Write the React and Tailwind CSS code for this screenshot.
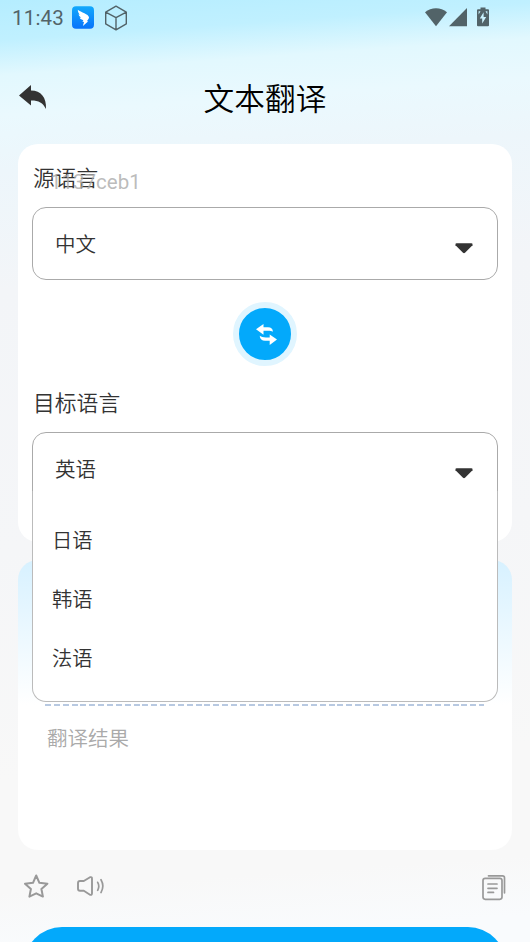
const options = ['日语', '韩语', '法语'];

function StatusBar() {
  return (
    <div className="flex h-9 items-center pl-3 pr-[41px] text-[#526368]">
      <span className="w-[60px] pt-px font-['Roboto'] text-[20.5px] font-normal leading-none tracking-[0.2px]">11:43</span>
      <svg className="-mt-px" width="22" height="23" viewBox="0 0 22 23">
        <defs>
          <linearGradient id="app" x1="0" y1="0" x2="0" y2="1">
            <stop offset="0" stopColor="#12a9fc" />
            <stop offset="1" stopColor="#0873fb" />
          </linearGradient>
        </defs>
        <rect y=".3" width="22" height="22.4" rx="4" fill="url(#app)" />
        <path d="M5.8 3.7C9 6.2 16.600 8 17 11.300c.1 1.200-1.200 2.800-2.100 4h1.400l-5.400 4.600 1.100-4-1.600-.3 1-1.300C8.700 13.500 7.900 12.500 7.700 11.600l1.500.1C7.500 10.700 6.800 9.500 6.600 8.300l1.200.4C6.400 7 5.800 5.400 5.800 3.700z" fill="#fff" />
      </svg>
      <svg className="-mt-px ml-[10px]" width="24" height="26" viewBox="0 0 24 26" fill="none" stroke="currentColor" strokeWidth="1.400" strokeLinejoin="round">
        <path d="M12 1.200l10.300 5.900v11.800L12 24.800 1.700 18.900V7.100zM1.700 7.100L12 12.700l10.300-5.600M12 12.700v12.100" />
      </svg>
      <svg className="-mt-px ml-auto" width="22" height="19" viewBox="0 0 22 19" fill="currentColor">
        <path d="M0 4.300C6.300-1.100 15.700-1.100 22 4.300L11 18.300z" />
      </svg>
      <svg className="-mt-px ml-[2px]" width="18" height="19" viewBox="0 0 18 19" fill="currentColor">
        <path d="M18 0v18.300H0z" />
      </svg>
      <svg className="-mt-[3px] ml-[10.500px]" width="12" height="20" viewBox="0 0 12 20" fill="currentColor">
        <path fillRule="evenodd" d="M3.500.5h5v1.700H11q1 0 1 1v15q0 1-1 1H1q-1 0-1-1v-15q0-1 1-1h2.500zM6.600 5.300L2.800 11.600h2.400v4.900l4-6.500H6.600zM1.600 4.200v3.200L3.500 4.200zM8.500 4.200l1.900 3.200V4.200z" />
      </svg>
    </div>
  );
}

function Header() {
  return (
    <header className="grid h-[108px] grid-cols-[1fr_auto_1fr] items-start pt-[39px]">
      <svg className="ml-[19px] mt-[10px]" width="28" height="25" viewBox="0 0 28 25" fill="#333">
        <path d="M0 10.400L12 0v5.400C22 5.600 27.600 12 27 24 23.800 17.400 19.500 15.300 12 15.400v5.200z" />
      </svg>
      <h1 className="text-[30.700px] font-[350] leading-[44px] text-black">文本翻译</h1>
    </header>
  );
}

function Select({ value }) {
  return (
    <div className="flex h-[73px] items-center justify-between rounded-[14px] border border-[#aaa] bg-white pl-[22px] pr-[24px] text-[20.500px] text-[#333]">
      <span>{value}</span>
      <svg className="mt-[9px]" width="18" height="11" viewBox="0 0 18 11">
        <path d="M1.500.3h15q1.500.2 1 1.900L10 9.800q-1 .9-2 0L.5 2.200Q0 .5 1.500.3z" fill="#333" />
      </svg>
    </div>
  );
}

function LanguageCard() {
  return (
    <section className="relative h-[398px] rounded-[20px] bg-white px-[14px] pt-[17px]">
      <h2 className="h-[46px] pl-px text-[21.700px] leading-[31px] text-[#333]">源语言</h2>
      <span className="absolute left-[32px] top-[26px] font-['Roboto'] text-[20.500px] font-normal leading-6 text-[#aaa]/80">1137ceb1</span>
      <Select value="中文" />
      <div className="flex justify-center pb-[21px] pt-[22px]">
        <button className="flex size-[64px] items-center justify-center rounded-full border-[6px] border-[#e0f5ff] bg-[#03a9fb]">
          <svg className="ml-[3px]" width="21" height="21" viewBox="0 0 21 21" fill="#fff">
            <path d="M0 5.200L7.500 0v3.200H12c3.200 0 4.900 1.600 4.900 4.600-1.500-.9-2.500-1.100-4.900-1.100H7.500v4zM21 15.400l-7.300-5v3H10c-3 0-4.500-.4-6.300-1.700.2 3.400 2.300 5.100 5.300 5.100h4.700V21z" />
          </svg>
        </button>
      </div>
      <h2 className="h-[45px] pl-px text-[21.800px] leading-[30px] text-[#333]">目标语言</h2>
      <div className="relative">
        <Select value="英语" />
        <ul className="absolute inset-x-0 top-[59px] z-10 flex h-[211px] flex-col rounded-b-[14px] border border-t-0 border-[#bbb] bg-white pl-[19px] pt-[20px] text-[20.300px] text-[#333]">
          {options.map((name) => (
            <li key={name} className="-mt-px mb-px h-[59px] leading-[58px]">{name}</li>
          ))}
        </ul>
      </div>
    </section>
  );
}

function ResultCard() {
  return (
    <section className="mt-[18px] h-[290px] rounded-[20px] bg-white bg-linear-to-b from-[#d7f1ff] from-0% to-white to-50% px-[27px] pt-[143px]">
      <div className="mt-px h-[1.500px] w-[439px] bg-[repeating-linear-gradient(90deg,#b8c9e1_0px,#b8c9e1_6px,transparent_6px,transparent_8.860px)]" />
      <p className="pl-[2px] pt-[14px] text-[20.500px] leading-[34px] text-[#aaa]">翻译结果</p>
    </section>
  );
}

function Actions() {
  return (
    <div className="flex h-[77px] items-start pl-[6px] pr-[6px] pt-[24px] text-[#999]">
      <svg width="25" height="25" viewBox="0 0 25 25" fill="none" stroke="currentColor" strokeWidth="2" strokeLinejoin="round">
        <path d="M12.200 1.500l3.200 7.300 8 .9-6 5.300 1.500 7.600-6.700-3.300-6.800 3.300 1.500-7.600-5.900-5.300 8-.9z" />
      </svg>
      <svg className="ml-[27px] mt-[1px]" width="29" height="23" viewBox="0 0 29 23" fill="none" stroke="currentColor" strokeWidth="1.900" strokeLinecap="round" strokeLinejoin="round">
        <path d="M4 6h3.800L14 2.200q2-.5 2 1.500v14.600q0 2-2 1.500l-6.200-4H4q-2 0-2-2V8q0-2 2-2z" />
        <path d="M21.700 7.300q2.200 3.900 0 8M25 4.700q3.700 6.300 0 12.900" strokeWidth="1.700" />
      </svg>
      <svg className="ml-auto" width="24" height="27" viewBox="0 0 24 27" fill="none" stroke="currentColor" strokeWidth="1.700" strokeLinecap="round" strokeLinejoin="round">
        <rect x="1" y="4.300" width="19" height="21" rx="2.200" />
        <path d="M6.500 1.800h14q2 0 2 2v15M6 10h9M6 14.300h9M6 18.400h5.500" />
      </svg>
    </div>
  );
}

export default function App() {
  return (
    <main className="h-[942px] w-[530px] overflow-hidden bg-[linear-gradient(176deg,#b5edff_0px,#c0f0ff_40px,#e2f8fe_75px,#eaf9fe_115px,#edf6fb_170px,#f3f5f8_290px,#f5f6f8_550px,#f8f8f8_780px,#f8f8f8_890px,#f9fbfd_950px)] font-['Noto_Sans_CJK_SC_DemiLight','Noto_Sans_CJK_SC',sans-serif] font-[350]">
      <StatusBar />
      <Header />
      <div className="px-[18px]">
        <LanguageCard />
        <ResultCard />
        <Actions />
        <button className="mx-auto block h-[76px] w-[482px] rounded-full bg-[#03a9fb]" aria-label="翻译" />
      </div>
    </main>
  );
}
